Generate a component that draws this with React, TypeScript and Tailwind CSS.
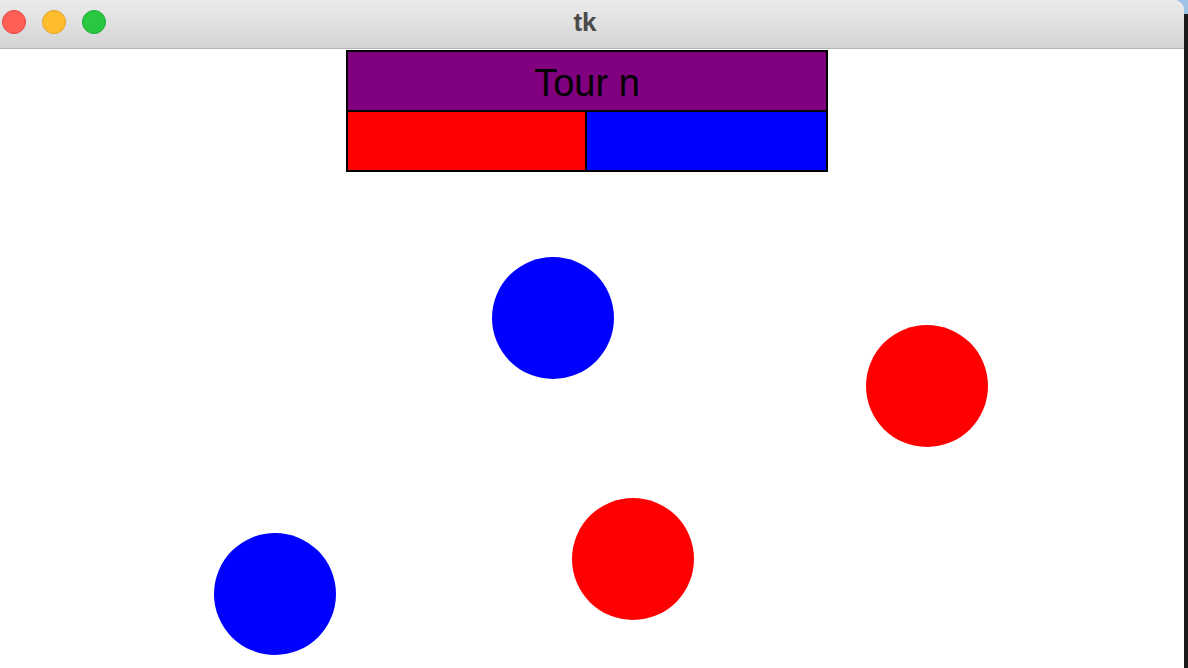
const circles = [
  { left: 492, top: 208, color: "bg-[#0000ff]" },
  { left: 866, top: 276, color: "bg-[#ff0000]" },
  { left: 572, top: 449, color: "bg-[#ff0000]" },
  { left: 214, top: 484, color: "bg-[#0000ff]" },
];

export default function App() {
  return (
    <div className="h-[668px] w-[1188px] overflow-hidden bg-[linear-gradient(to_bottom,#9cc3e4_0px,#9cc3e4_14px,#1b1b1b_14px)]">
      <div className="flex h-full w-[1184px] flex-col overflow-hidden rounded-tr-[10px] bg-white">
        {/* title bar */}
        <div className="relative flex h-[49px] shrink-0 items-center border-b border-[#b4b4b4] bg-gradient-to-b from-[#ebebeb] to-[#d4d4d4]">
          <div className="flex items-center gap-4 pl-[2px] pb-[5px]">
            <span className="h-6 w-6 rounded-full border border-[#e2463f] bg-[#ff5f57]" />
            <span className="h-6 w-6 rounded-full border border-[#e1a325] bg-[#febc2e]" />
            <span className="h-6 w-6 rounded-full border border-[#1fab33] bg-[#28c840]" />
          </div>
          <div className="absolute inset-x-0 top-0 flex h-[44px] items-center justify-center pr-[14px]">
            <span className="font-['Liberation_Sans',sans-serif] text-[26px] font-bold text-[#4a4a4a]">tk</span>
          </div>
        </div>

        {/* canvas */}
        <div className="relative flex-1">
          <div className="ml-[346px] mt-[1px] w-[482px] border-2 border-black">
            <div className="flex h-[60px] items-center justify-center border-b-2 border-black bg-[#800080] pt-[3px]">
              <span className="font-['Liberation_Sans',sans-serif] text-[38px] leading-none text-black">Tour n</span>
            </div>
            <div className="grid h-[58px] grid-cols-2">
              <div className="border-r-2 border-black bg-[#ff0000]" />
              <div className="bg-[#0000ff]" />
            </div>
          </div>

          {circles.map((c, i) => (
            <div
              key={i}
              className={`absolute h-[122px] w-[122px] rounded-full ${c.color}`}
              style={{ left: c.left, top: c.top }}
            />
          ))}
        </div>
      </div>
    </div>
  );
}
